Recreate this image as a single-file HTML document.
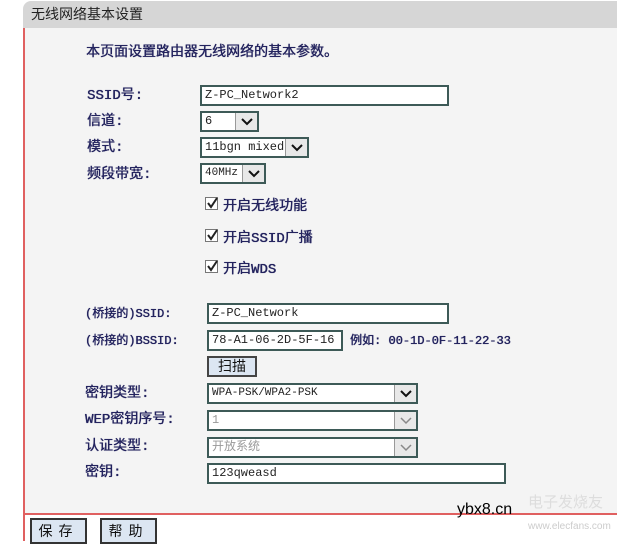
<!DOCTYPE html>
<html><head><meta charset="utf-8"><style>
*{box-sizing:border-box;margin:0;padding:0}
body{width:635px;height:541px;background:#fff;position:relative;overflow:hidden;font-family:"Liberation Mono","Noto Sans CJK SC",monospace;font-size:13px;color:#23235e;line-height:16px}
.a{position:absolute}
#hdr{left:23px;top:1px;width:594px;height:27px;background:#d6d6d6;border-top-left-radius:8px;color:#222;font-family:"Liberation Sans","Noto Sans CJK SC",sans-serif;font-size:14px;line-height:26px;padding-left:8px}
#body{left:23px;top:28px;width:594px;height:486px;background:#f4f4f4;border-left:2px solid #e06060}
#line{left:23px;top:513px;width:594px;height:2px;background:#e06060}
#bot{left:23px;top:515px;width:2px;height:26px;background:#e06060}
.lbl{font-family:"Liberation Mono","Noto Sans CJK SC",monospace;white-space:nowrap;font-size:14px;text-shadow:0 0 0.6px #23235e,0.3px 0 0 #23235e}
.in{background:#fff;border:2px solid #3d5a57;height:21px;line-height:17px;padding-left:3px;color:#222;font-size:12px;white-space:nowrap;overflow:hidden}
.sel .ar{position:absolute;right:0;top:0;width:22px;height:17px;background:#e8e8e8;border-left:1px solid #999}
.ar svg{position:absolute;left:5px;top:4px}
.dis{color:#999}
.cb{width:13px;height:13px;border:1px solid #777;background:#fff}
.btn{border:2px solid #333;background:#dce6f2;text-align:center;font-family:"Liberation Sans","Noto Sans CJK SC",sans-serif;font-size:14px;color:#111}
</style></head><body>
<div id="hdr" class="a">无线网络基本设置</div>
<div id="body" class="a"></div>
<div id="line" class="a"></div>
<div id="bot" class="a"></div>
<div class="a" style="left:86px;top:42px;font-family:'Liberation Sans','Noto Sans CJK SC',sans-serif;font-size:14px;line-height:18px;text-shadow:0 0 0.6px #23235e,0.3px 0 0 #23235e">本页面设置路由器无线网络的基本参数。</div>

<div class="a lbl" style="left:87px;top:88px">SSID号:</div>
<div class="a in" style="left:200px;top:85px;width:249px">Z-PC_Network2</div>
<div class="a lbl" style="left:87px;top:114px">信道:</div>
<div class="a in sel" style="left:200px;top:111px;width:59px">6<span class="ar"><svg width="12" height="9"><path d="M1 2l5 5 5-5" stroke="#111" stroke-width="2" fill="none"/></svg></span></div>
<div class="a lbl" style="left:87px;top:140px">模式:</div>
<div class="a in sel" style="left:200px;top:137px;width:109px">11bgn mixed<span class="ar"><svg width="12" height="9"><path d="M1 2l5 5 5-5" stroke="#111" stroke-width="2" fill="none"/></svg></span></div>
<div class="a lbl" style="left:87px;top:167px">频段带宽:</div>
<div class="a in sel" style="left:200px;top:163px;width:66px;font-size:11px">40MHz<span class="ar"><svg width="12" height="9"><path d="M1 2l5 5 5-5" stroke="#111" stroke-width="2" fill="none"/></svg></span></div>

<div class="a cb" style="left:205px;top:197px"><svg width="12" height="12" style="position:absolute;left:0;top:-1px"><path d="M2 6l3 4 6-9" stroke="#222" stroke-width="2" fill="none"/></svg></div>
<div class="a lbl" style="left:223px;top:199px">开启无线功能</div>
<div class="a cb" style="left:205px;top:229px"><svg width="12" height="12" style="position:absolute;left:0;top:-1px"><path d="M2 6l3 4 6-9" stroke="#222" stroke-width="2" fill="none"/></svg></div>
<div class="a lbl" style="left:223px;top:231px">开启SSID广播</div>
<div class="a cb" style="left:205px;top:260px"><svg width="12" height="12" style="position:absolute;left:0;top:-1px"><path d="M2 6l3 4 6-9" stroke="#222" stroke-width="2" fill="none"/></svg></div>
<div class="a lbl" style="left:223px;top:262px">开启WDS</div>

<div class="a lbl" style="left:85px;top:306px;font-size:12px">(桥接的)SSID:</div>
<div class="a in" style="left:207px;top:303px;width:242px">Z-PC_Network</div>
<div class="a lbl" style="left:85px;top:333px;font-size:12px">(桥接的)BSSID:</div>
<div class="a in" style="left:207px;top:330px;width:136px">78-A1-06-2D-5F-16</div>
<div class="a lbl" style="left:350px;top:333px;font-size:12px">例如: 00-1D-0F-11-22-33</div>
<div class="a btn" style="left:207px;top:356px;width:50px;height:21px;line-height:17px;border-color:#444">扫描</div>
<div class="a lbl" style="left:85px;top:386px">密钥类型:</div>
<div class="a in sel" style="left:207px;top:383px;width:211px;font-size:11px">WPA-PSK/WPA2-PSK<span class="ar"><svg width="12" height="9"><path d="M1 2l5 5 5-5" stroke="#111" stroke-width="2" fill="none"/></svg></span></div>
<div class="a lbl" style="left:85px;top:412px">WEP密钥序号:</div>
<div class="a in sel dis" style="left:207px;top:410px;width:211px">1<span class="ar"><svg width="12" height="9"><path d="M1 2l5 5 5-5" stroke="#888" stroke-width="1.5" fill="none"/></svg></span></div>
<div class="a lbl" style="left:85px;top:439px">认证类型:</div>
<div class="a in sel dis" style="left:207px;top:437px;width:211px">开放系统<span class="ar"><svg width="12" height="9"><path d="M1 2l5 5 5-5" stroke="#888" stroke-width="1.5" fill="none"/></svg></span></div>
<div class="a lbl" style="left:85px;top:465px">密钥:</div>
<div class="a in" style="left:207px;top:463px;width:299px">123qweasd</div>

<div class="a btn" style="left:30px;top:518px;width:57px;height:26px;line-height:22px;letter-spacing:6px">保存</div>
<div class="a btn" style="left:100px;top:518px;width:57px;height:26px;line-height:22px;letter-spacing:6px">帮助</div>

<div class="a" style="left:457px;top:502px;font-family:'Liberation Sans',sans-serif;font-size:16px;color:#000">ybx8.cn</div>
<div class="a" style="left:528px;top:494px;font-family:'Noto Sans CJK SC',sans-serif;font-size:15px;color:#ddd">电子发烧友</div>
<div class="a" style="left:528px;top:519px;font-family:'Liberation Sans',sans-serif;font-size:10px;color:#ccc">www.elecfans.com</div>
</body></html>
